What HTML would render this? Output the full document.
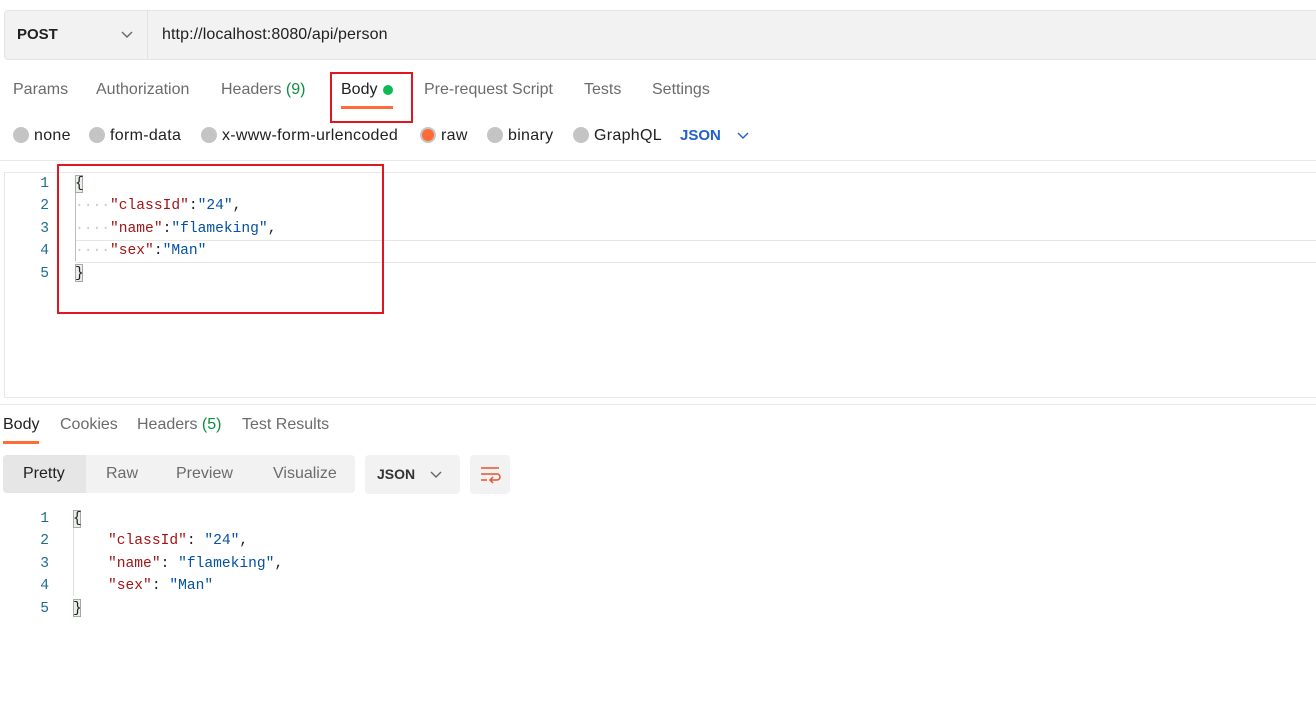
<!DOCTYPE html>
<html><head><meta charset="utf-8"><style>
*{margin:0;padding:0;box-sizing:border-box}
body{width:1316px;height:705px;background:#fff;font-family:"Liberation Sans",sans-serif;position:relative;overflow:hidden;color:#212121}
.a{position:absolute;white-space:nowrap}
.t{font-size:16px;color:#6b6b6b}
.f{font-size:16px;letter-spacing:.3px}
.mono{font-family:"Liberation Mono",monospace;font-size:14.6px}
.ln{color:#1f6e8c;width:20px;text-align:right}
.k{color:#a31515}.s{color:#0451a5}.p{color:#222}
.dot{color:#ccc}
.rad{position:absolute;width:16px;height:16px;border-radius:50%;background:#c4c4c4}
.br{position:absolute;width:8px;height:18px;border:1px solid #a8a8a8;background:#e8f0e8}
</style></head><body>
<div class="a" style="left:4px;top:10px;width:1320px;height:50px;background:#f2f2f2;border:1px solid #e4e4e4;border-radius:4px"></div>
<div class="a" style="left:147px;top:11px;width:1px;height:48px;background:#e4e4e4"></div>
<div class="a" style="left:17px;top:26px;font-size:15px;font-weight:bold;color:#212121">POST</div>
<svg class="a" style="left:121px;top:30px" width="12" height="10"><path d="M1 2 L6 7 L11 2" stroke="#666" stroke-width="1.4" fill="none"/></svg>
<div class="a f" style="left:162px;top:26px;letter-spacing:.1px">http://localhost:8080/api/person</div>
<div class="a t" style="left:13px;top:81px">Params</div>
<div class="a t" style="left:96px;top:81px">Authorization</div>
<div class="a t" style="left:221px;top:81px">Headers <span style="color:#0a8f3e">(9)</span></div>
<div class="a" style="left:341px;top:81px;font-size:16px;color:#212121">Body</div>
<div class="a" style="left:383px;top:85px;width:10px;height:10px;border-radius:50%;background:#0cbb52"></div>
<div class="a" style="left:341px;top:106px;width:52px;height:3px;background:#ff6c37"></div>
<div class="a" style="left:330px;top:72px;width:83px;height:51px;border:2px solid #e1161e"></div>
<div class="a t" style="left:424px;top:81px">Pre-request Script</div>
<div class="a t" style="left:584px;top:81px">Tests</div>
<div class="a t" style="left:652px;top:81px">Settings</div>
<div class="rad" style="left:13px;top:127px"></div><div class="a f" style="left:34px;top:127px">none</div>
<div class="rad" style="left:89px;top:127px"></div><div class="a f" style="left:110px;top:127px">form-data</div>
<div class="rad" style="left:201px;top:127px"></div><div class="a f" style="left:222px;top:127px">x-www-form-urlencoded</div>
<div class="rad" style="left:420px;top:127px;background:#ff6c37;border:2px solid #c4c4c4"></div><div class="a f" style="left:441px;top:127px">raw</div>
<div class="rad" style="left:487px;top:127px"></div><div class="a f" style="left:508px;top:127px">binary</div>
<div class="rad" style="left:573px;top:127px"></div><div class="a f" style="left:594px;top:127px">GraphQL</div>
<div class="a" style="left:680px;top:127px;font-size:15px;font-weight:bold;color:#2060d0">JSON</div>
<svg class="a" style="left:737px;top:131px" width="12" height="10"><path d="M1 2 L6 7 L11 2" stroke="#2060d0" stroke-width="1.4" fill="none"/></svg>
<div class="a" style="left:0;top:160px;width:1316px;height:1px;background:#e8e8e8"></div>
<div class="a" style="left:4px;top:172px;width:1320px;height:226px;border:1px solid #e8e8e8;border-right:none"></div>
<div class="a" style="left:75px;top:240px;width:1250px;height:23px;border-top:1px solid #e6e6e6;border-bottom:1px solid #e6e6e6"></div>
<div class="a" style="left:75px;top:193px;width:1px;height:68px;background:#bbb"></div>
<div class="a mono ln" style="left:29px;top:173px;line-height:22.4px;white-space:pre">1
2
3
4
5</div>
<div class="br" style="left:75px;top:175px"></div>
<div class="br" style="left:75px;top:264px"></div>
<div class="a mono" style="left:75px;top:173px;line-height:22.4px;white-space:pre"><span class="p">{</span>
<span class="dot">····</span><span class="k">"classId"</span>:<span class="s">"24"</span>,
<span class="dot">····</span><span class="k">"name"</span>:<span class="s">"flameking"</span>,
<span class="dot">····</span><span class="k">"sex"</span>:<span class="s">"Man"</span>
<span class="p">}</span></div>
<div class="a" style="left:57px;top:164px;width:327px;height:150px;border:2px solid #e1161e"></div>
<div class="a" style="left:0;top:404px;width:1316px;height:1px;background:#e8e8e8"></div>
<div class="a" style="left:3px;top:416px;font-size:16px;color:#212121">Body</div>
<div class="a" style="left:3px;top:441px;width:36px;height:3px;background:#ff6c37"></div>
<div class="a t" style="left:60px;top:416px">Cookies</div>
<div class="a t" style="left:137px;top:416px">Headers <span style="color:#0a8f3e">(5)</span></div>
<div class="a t" style="left:242px;top:416px">Test Results</div>
<div class="a" style="left:3px;top:455px;width:352px;height:38px;background:#f2f2f2;border-radius:4px"></div>
<div class="a" style="left:3px;top:455px;width:83px;height:38px;background:#e6e6e6;border-radius:4px 0 0 4px"></div>
<div class="a" style="left:23px;top:465px;font-size:16px;color:#212121">Pretty</div>
<div class="a t" style="left:106px;top:465px">Raw</div>
<div class="a t" style="left:176px;top:465px">Preview</div>
<div class="a t" style="left:273px;top:465px">Visualize</div>
<div class="a" style="left:365px;top:455px;width:95px;height:39px;background:#f2f2f2;border-radius:4px"></div>
<div class="a" style="left:377px;top:466px;font-size:14px;font-weight:bold;color:#333">JSON</div>
<svg class="a" style="left:430px;top:470px" width="12" height="10"><path d="M1 2 L6 7 L11 2" stroke="#666" stroke-width="1.4" fill="none"/></svg>
<div class="a" style="left:470px;top:455px;width:40px;height:39px;background:#f2f2f2;border-radius:4px"></div>
<svg class="a" style="left:480px;top:466px" width="22" height="18"><path d="M1 2H19M1 8H17a3 3 0 0 1 0 6H11M13 11L10 14L13 17M1 14H7" stroke="#e8552a" stroke-width="1.5" fill="none"/></svg>
<div class="a" style="left:73px;top:528px;width:1px;height:68px;background:#ddd"></div>
<div class="a mono ln" style="left:29px;top:508px;line-height:22.4px;white-space:pre">1
2
3
4
5</div>
<div class="br" style="left:73px;top:510px"></div>
<div class="br" style="left:73px;top:599px"></div>
<div class="a mono" style="left:73px;top:508px;line-height:22.4px;white-space:pre"><span class="p">{</span>
    <span class="k">"classId"</span>: <span class="s">"24"</span>,
    <span class="k">"name"</span>: <span class="s">"flameking"</span>,
    <span class="k">"sex"</span>: <span class="s">"Man"</span>
<span class="p">}</span></div>
</body></html>
